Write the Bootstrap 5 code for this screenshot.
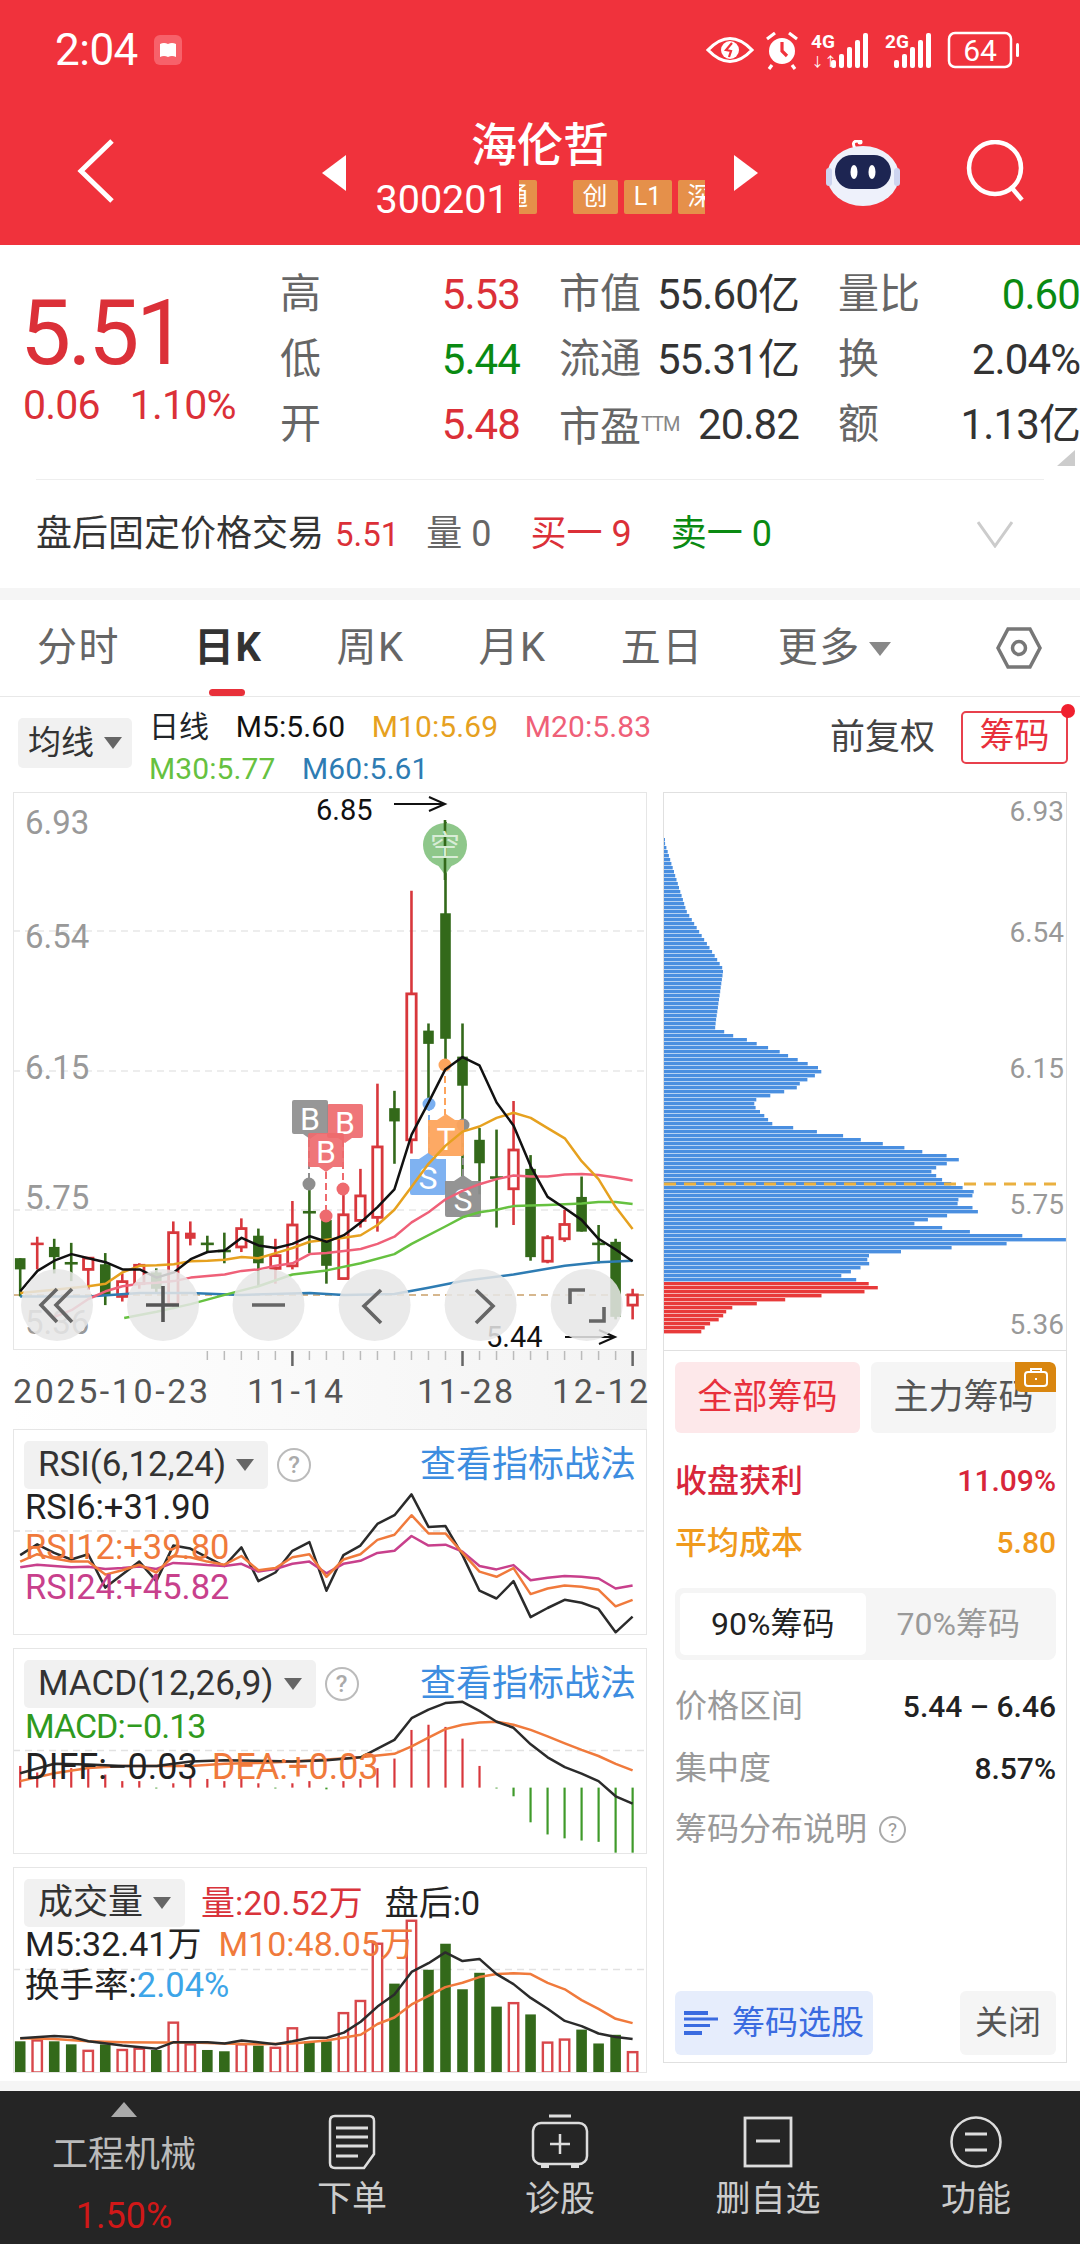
<!DOCTYPE html>
<html lang="zh-CN"><head><meta charset="utf-8"><title>海伦哲</title>
<link href="https://cdn.jsdelivr.net/npm/bootstrap@5.3.0/dist/css/bootstrap.min.css" rel="stylesheet">
<style>
html,body{margin:0;width:1080px;height:2244px;overflow:hidden;background:#fff}
body{font-family:Roboto,"Noto Sans CJK SC",sans-serif;color:#333;line-height:1.2}
svg{display:block}
.top-red{background:#f0323c;height:245px;color:#fff}
.stat-bar{height:100px;padding:0 44px 0 55px}
.clock{font-size:44px;line-height:100px;letter-spacing:-.5px}
.nav-grid{display:grid;grid-template-columns:322px 436px 322px;height:145px}
.back-cell{padding:39px 0 0 77px}
.stock-name{font-size:46px;line-height:56px;text-align:center;margin-top:17px;font-weight:500}
.code-line{width:329px;margin:0 auto;font-size:39.5px;line-height:40px;margin-top:7px}
.code-num{width:143px;flex:none}
.tag-clip{width:186px;overflow:hidden;gap:6px}
.stag{flex:none;height:34px;border-radius:2px;background:#e5904a;font-size:25px;line-height:34px;text-align:center;color:#fff;width:45px}
.stag-a{margin-left:-24px;margin-right:30px;width:42px}
.stag-b{width:48px}
.side-tri{margin-top:55px;flex:none}
.right-cell{padding:40px 52px 0 0;gap:66px}
.quote-wrap{height:343px;position:relative}
.quote-top{height:234px}
.big-price{width:281px;padding:39px 0 0 20px;color:#db3038}
.big-num{font-size:91px;line-height:98px;letter-spacing:-3.4px}
.sub-num{font-size:41px;line-height:46px;letter-spacing:-.8px;gap:30px;padding-left:3px}
.qgrid{display:grid;grid-template-columns:240px 240px 242px;column-gap:39px;grid-auto-rows:65px;padding-top:17px;font-size:42px;line-height:65px;white-space:nowrap;letter-spacing:-.9px}
.qlab{color:#666;font-size:41px;letter-spacing:0}
.qval{color:#333}
.red-t{color:#db3038}.green-t{color:#0a8a12}
.ttm{font-size:20px;color:#888;vertical-align:10px;letter-spacing:-1px}
.corner-tri{position:absolute;right:5px;top:205px;width:0;height:0;border-left:18px solid transparent;border-bottom:16px solid #ccc}
.after-row{margin:0 36px;border-top:1px solid #eee;height:109px;font-size:36px;line-height:109px;white-space:nowrap}
.after-row span{margin-right:27px}
.after-row .after-px{font-size:33px;margin-left:-16px}
.after-row .after-mt{margin-left:12px}
.after-row .after-gr{color:#666}
.after-chev{margin:40px 31px 0 auto}
.gap-band{height:12px;background:#f5f5f5}
.gap-band2{height:10px;background:#f5f5f5}
.tabs-row{height:97px;border-bottom:1px solid #e8e8e8;padding:0 38px 0 37px;gap:74px}
.tabs-row .nav-link{padding:0;color:#666;font-size:40px;line-height:96px;position:relative;letter-spacing:1.5px}
.tabs-row .nav-link.active{color:#333;font-weight:700}
.tabs-row .nav-link.active::after{content:"";position:absolute;left:15px;bottom:0;width:36px;height:7px;background:#e8303a;border-radius:4px}
.tri-d{display:inline-block;width:0;height:0;border:11px solid transparent;border-top:14px solid #888;border-bottom:0;vertical-align:5px;margin-left:8px}
.tool-row{height:95px;padding:0 12px 0 18px}
.pick-box{background:#f1f1f1;border-radius:5px;color:#333;font-size:33px;height:50px;line-height:50px;padding:0 10px;white-space:nowrap;flex:none}
.pick-box i{display:inline-block;width:0;height:0;border:9px solid transparent;border-top:12px solid #666;border-bottom:0;vertical-align:5px;margin-left:10px}
.pick-up{margin-top:-4px}
.legend-b{font-size:30px;line-height:42px;margin-left:17px;width:560px;flex:none;white-space:nowrap;padding-top:6px}
.legend-b span{margin-right:26.5px;letter-spacing:.1px}
.tool-end{margin-top:-14px}
.c-blk{color:#111}.c-org{color:#e6a11f}.c-pnk{color:#ef6078}.c-grn{color:#66c140}.c-blu{color:#2e7cb3}
.fq-t{font-size:35px;color:#444;margin-right:26px}
.chip-toggle{width:107px;height:53px;border:2px solid #e8404c;border-radius:5px;color:#e8303c;font-size:35px;line-height:48px;text-align:center;position:relative}
.chip-toggle::after{content:"";position:absolute;right:-9px;top:-9px;width:14px;height:14px;border-radius:50%;background:#f0202e}
.left-col{width:650px;margin-left:13px;flex:none}
.frame{border:1px solid #e6e6e6;width:634px;position:relative;overflow:hidden;background:#fff}
.frame>svg{position:absolute;left:-1px;top:-1px}
.kbox{height:558px}
.axis-box{height:79px}
.ibox{height:206px;margin-bottom:13px;padding:11px 10px 0 10px;font-size:35px}
.vbox{height:206px;margin:0;padding:11px 10px 0 10px;font-size:35px}
.ihead{position:relative;height:48px}
.ihead .pick-box{height:48px;line-height:48px;font-size:35px;padding:0 14px}
.help-c{width:34px;height:34px;border:2px solid #bbb;border-radius:50%;color:#aaa;font-size:24px;line-height:30px;text-align:center;margin-left:9px;font-weight:500;flex:none}
.guide-l{margin-left:auto;color:#3d8de0;font-size:36px;line-height:48px;text-decoration:none}
.itext{position:relative;top:-2px;font-size:34.5px;line-height:40px;padding-left:1px;white-space:nowrap}
.itext span{margin-right:20px}
.macd-val{letter-spacing:-1px;font-size:34px}
.diff-row{font-size:36px;top:-1px}
.diff-row .c-i-org{margin-left:-6px}
.vol-m{font-size:34px;top:-3px}
.vol-m span{margin-right:17px}
.itext .c-i-sky{margin:0}
.c-i-org{color:#f07a3c}.c-i-pnk{color:#c8408c}.c-i-grn{color:#2f9a20}.c-i-sky{color:#3da5e8}.c-i-blk{color:#222}.c-i-red{color:#d9333b}
.vtop{margin-left:16px;line-height:48px;font-size:34px}
.vtop+.vtop{margin-left:22px}
.right-col{width:404px;height:1271px;border:1px solid #e0e0e0;flex:none}
.rchart{height:558px;position:relative;border-bottom:1px solid #e0e0e0;overflow:hidden}
.rchart svg{position:absolute;left:-1px;top:-1px}
.rlow{height:712px;padding:11px 10px 8px 11px}
.chip-tab{height:71px;width:185px;padding:0;font-size:35px;border:0;border-radius:6px;position:relative;line-height:71px;overflow:hidden}
.chip-tab.on,.chip-tab.on:hover{background:#fde8ea;color:#e8303c}
.chip-tab.off,.chip-tab.off:hover{background:#f5f5f5;color:#555}
.lock-t{position:absolute;right:0;top:0;width:41px;height:30px;background:#d9860f;border-radius:0 6px 0 6px;display:flex;align-items:center;justify-content:center}
.stat-a{line-height:62px;font-size:32px;font-weight:500}
.stat-first{margin-top:17px}
.stat-a b{font-size:30px;font-weight:500}
.c-rw{color:#d8263a}.c-aw{color:#f09a1c}
.seg-box{height:72px;background:#f5f5f5;border-radius:8px;padding:5px;margin:14px 0 16px}
.seg-box>div{flex:1 1 0;text-align:center;font-size:32px;line-height:62px;color:#999;border-radius:5px}
.seg-box>div.on{background:#fff;color:#222}
.stat-b{line-height:61.5px;font-size:32px;color:#999}
.stat-b b{font-size:30px;font-weight:500;color:#222}
.help-s{width:27px;height:27px;border:2px solid #aaa;border-radius:50%;font-size:19px;line-height:23px;text-align:center;color:#999;margin-left:12px;display:inline-block;vertical-align:4px}
.pick-btn,.pick-btn:hover{height:64px;width:198px;background:#e6edfc;color:#3a6be0;font-size:33px;border:0;padding:0;border-radius:6px;display:flex;align-items:center;justify-content:center;gap:14px}
.close-btn,.close-btn:hover{height:64px;width:96px;background:#f5f5f5;color:#555;font-size:33px;border:0;padding:0;border-radius:6px}
.after-gap{height:8px}
.foot-bar{height:153px;background:#252525;color:#ccc}
.foot-first{width:248px;text-align:center;color:#bbb;font-size:36px;padding-top:11px}
.foot-up{width:0;height:0;border:13px solid transparent;border-bottom:15px solid #aaa;border-top:0;margin:0 auto 17px}
.foot-pct{color:#d01818;margin-top:17px;font-size:36px;line-height:44px}
.foot-item{width:208px;padding-top:23px;text-align:center;font-size:35px;line-height:42px}
.foot-item svg{margin:0 auto 9px}
</style></head><body>
<header class="top-red">
 <div class="stat-bar d-flex align-items-center justify-content-between">
  <div class="d-flex align-items-center gap-3">
   <span class="clock">2:04</span>
   <svg width="28" height="30" viewBox="0 0 28 30"><rect width="28" height="30" rx="6" fill="#f7616a"/><path d="M6 9q4-2 8 0q4-2 8 0v13q-4-2-8 0q-4-2-8 0z" fill="#fff"/></svg>
  </div>
  <div class="d-flex align-items-center">
   <svg width="330" height="40" viewBox="0 0 330 40" fill="none" stroke="#fff" stroke-width="3.2">
    <path d="M2 20Q24-3 46 20Q24 43 2 20z"/><circle cx="24" cy="20" r="9" fill="#fff" stroke="none"/><path d="M26 13l-6 7 5 1-2 6" stroke="#f0323c" stroke-width="2.2"/>
    <circle cx="76" cy="21" r="13" fill="#fff" stroke="none"/><path d="M76 12v9l5 5" stroke="#f0323c"/><path d="M61 9l8-6M91 9l-8-6M66 35l-3 4M86 35l3 4"/>
    <text x="105" y="18" font-size="19" font-weight="700" fill="#fff" stroke="none" font-family="Roboto">4G</text>
    <text x="105" y="36" font-size="13" fill="#fff" stroke="none">↓↑</text>
    <g stroke="none" fill="#fff"><rect x="125" y="30" width="5" height="8" rx="2"/><rect x="133" y="24" width="5" height="14" rx="2"/><rect x="141" y="17" width="5" height="21" rx="2"/><rect x="149" y="10" width="5" height="28" rx="2"/><rect x="157" y="3" width="5" height="35" rx="2"/>
    <rect x="188" y="30" width="5" height="8" rx="2"/><rect x="196" y="24" width="5" height="14" rx="2"/><rect x="204" y="17" width="5" height="21" rx="2"/><rect x="212" y="10" width="5" height="28" rx="2"/><rect x="220" y="3" width="5" height="35" rx="2"/></g>
    <text x="179" y="18" font-size="19" font-weight="700" fill="#fff" stroke="none" font-family="Roboto">2G</text>
    <rect x="243" y="3" width="62" height="34" rx="6" stroke-width="2.5"/><text x="274" y="31" font-size="30" text-anchor="middle" fill="#fff" stroke="none" font-family="Roboto">64</text>
    <rect x="310" y="13" width="3" height="14" rx="1.5" fill="#fff" stroke="none"/>
   </svg>
  </div>
 </div>
 <div class="nav-grid">
  <div class="back-cell"><svg width="38" height="64" viewBox="0 0 38 64" fill="none" stroke="#fff" stroke-width="5"><path d="M35 2L4 32l31 30"/></svg></div>
  <div class="d-flex">
   <svg class="side-tri" width="24" height="36" viewBox="0 0 24 36"><path d="M24 0v36L0 18z" fill="#fff"/></svg>
   <div class="flex-grow-1 text-center">
    <div class="stock-name">海伦哲</div>
    <div class="code-line d-flex"><div class="code-num text-start">300201</div>
     <div class="tag-clip d-flex"><span class="stag stag-a">通</span><span class="stag">创</span><span class="stag stag-b">L1</span><span class="stag">深</span></div></div>
   </div>
   <svg class="side-tri" width="24" height="36" viewBox="0 0 24 36"><path d="M0 0v36l24-18z" fill="#fff"/></svg>
  </div>
  <div class="right-cell d-flex justify-content-end align-items-start">
   <svg width="74" height="66" viewBox="0 0 74 66"><path d="M30 10q-6-9 2-9" fill="none" stroke="#fff" stroke-width="3"/><circle cx="34" cy="2" r="2.5" fill="#fff"/><ellipse cx="37" cy="36" rx="36" ry="30" fill="#eef1fb"/><rect x="0" y="28" width="6" height="18" rx="3" fill="#cdd4f0"/><rect x="68" y="28" width="6" height="18" rx="3" fill="#cdd4f0"/><rect x="9" y="15" width="56" height="34" rx="17" fill="#1d2552"/><ellipse cx="28" cy="32" rx="3.5" ry="7" fill="#fff"/><ellipse cx="46" cy="32" rx="3.5" ry="7" fill="#fff"/></svg>
   <svg width="62" height="62" viewBox="0 0 62 62" fill="none" stroke="#fff" stroke-width="4.5"><circle cx="29" cy="28" r="26"/><path d="M46 48l10 12"/></svg>
  </div>
 </div>
</header>
<section class="quote-wrap">
 <div class="quote-top d-flex">
  <div class="big-price"><div class="big-num">5.51</div><div class="sub-num d-flex"><span>0.06</span><span>1.10%</span></div></div>
  <div class="qgrid">
   <div class="d-flex justify-content-between"><span class="qlab">高</span><span class="red-t">5.53</span></div>
   <div class="d-flex justify-content-between"><span class="qlab">市值</span><span class="qval">55.60亿</span></div>
   <div class="d-flex justify-content-between"><span class="qlab">量比</span><span class="green-t">0.60</span></div>
   <div class="d-flex justify-content-between"><span class="qlab">低</span><span class="green-t">5.44</span></div>
   <div class="d-flex justify-content-between"><span class="qlab">流通</span><span class="qval">55.31亿</span></div>
   <div class="d-flex justify-content-between"><span class="qlab">换</span><span class="qval">2.04%</span></div>
   <div class="d-flex justify-content-between"><span class="qlab">开</span><span class="red-t">5.48</span></div>
   <div class="d-flex justify-content-between"><span class="qlab">市盈<span class="ttm">TTM</span></span><span class="qval">20.82</span></div>
   <div class="d-flex justify-content-between"><span class="qlab">额</span><span class="qval">1.13亿</span></div>
  </div>
 </div>
 <div class="corner-tri"></div>
 <div class="after-row d-flex position-relative"><span>盘后固定价格交易</span><span class="red-t after-px">5.51</span><span class="after-gr">量 0</span><span class="red-t after-mt">买一 9</span><span class="green-t after-mt">卖一 0</span>
  <svg class="after-chev" width="36" height="28" viewBox="0 0 36 28" fill="none" stroke="#ccc" stroke-width="3"><path d="M1 2l17 24L35 2"/></svg></div>
</section>
<div class="gap-band"></div>
<nav class="nav tabs-row align-items-center flex-nowrap">
 <a class="nav-link" href="#">分时</a><a class="nav-link active" href="#">日K</a><a class="nav-link" href="#">周K</a><a class="nav-link" href="#">月K</a><a class="nav-link" href="#">五日</a><a class="nav-link" href="#">更多<i class="tri-d"></i></a>
 <svg class="ms-auto" width="46" height="42" viewBox="0 0 46 42" fill="none" stroke="#777" stroke-width="3.5"><path d="M12 2h22l10 19-10 19H12L2 21z"/><circle cx="23" cy="21" r="6.5"/></svg>
</nav>
<div class="tool-row d-flex align-items-center">
 <div class="pick-box pick-up">均线<i></i></div>
 <div class="legend-b"><span class="text-dark">日线</span><span class="c-blk">M5:5.60</span><span class="c-org">M10:5.69</span><span class="c-pnk">M20:5.83</span><br><span class="c-grn">M30:5.77</span><span class="c-blu">M60:5.61</span></div>
 <div class="ms-auto d-flex align-items-center tool-end"><span class="fq-t">前复权</span><div class="chip-toggle">筹码</div></div>
</div>
<main class="d-flex">
 <div class="left-col">
  <div class="frame kbox"><svg id="k" width="634" height="558" viewBox="13 792 634 558"></svg></div>
  <div class="axis-box"><svg id="ax" width="650" height="79" viewBox="13 1350 650 79"></svg></div>
  <div class="frame ibox"><svg id="rsi" width="634" height="206" viewBox="13 1430 634 206"></svg>
   <div class="ihead d-flex align-items-center"><div class="pick-box">RSI(6,12,24)<i></i></div><div class="help-c">?</div><a class="guide-l" href="#">查看指标战法</a></div>
   <div class="itext c-i-blk">RSI6:+31.90</div><div class="itext c-i-org">RSI12:+39.80</div><div class="itext c-i-pnk">RSI24:+45.82</div>
  </div>
  <div class="frame ibox"><svg id="macd" width="634" height="206" viewBox="13 1648.5 634 206"></svg>
   <div class="ihead d-flex align-items-center"><div class="pick-box">MACD(12,26,9)<i></i></div><div class="help-c">?</div><a class="guide-l" href="#">查看指标战法</a></div>
   <div class="itext c-i-grn macd-val">MACD:−0.13</div><div class="itext diff-row"><span class="c-i-blk">DIFF:−0.03</span><span class="c-i-org">DEA:+0.03</span></div>
  </div>
  <div class="frame vbox"><svg id="vol" width="634" height="206" viewBox="13 1867.5 634 206"></svg>
   <div class="ihead d-flex align-items-center"><div class="pick-box">成交量<i></i></div><span class="vtop c-i-red">量:20.52万</span><span class="vtop c-i-blk">盘后:0</span></div>
   <div class="itext vol-m"><span class="c-i-blk">M5:32.41万</span><span class="c-i-org">M10:48.05万</span></div><div class="itext c-i-blk">换手率:<span class="c-i-sky">2.04%</span></div>
  </div>
 </div>
 <aside class="right-col">
  <div class="rchart"><svg id="chip" width="404" height="558" viewBox="663 792 404 558"></svg></div>
  <div class="rlow d-flex flex-column">
   <div class="d-flex justify-content-between"><button class="btn chip-tab on">全部筹码</button><button class="btn chip-tab off">主力筹码<span class="lock-t"><svg width="24" height="20" viewBox="0 0 24 20" fill="none" stroke="#fff" stroke-width="2"><rect x="1" y="5" width="22" height="14" rx="3"/><path d="M7 5V2h10v3"/><path d="M12 11v2"/></svg></span></button></div>
   <div class="stat-a stat-first c-rw d-flex justify-content-between"><span>收盘获利</span><b>11.09%</b></div>
   <div class="stat-a c-aw d-flex justify-content-between"><span>平均成本</span><b>5.80</b></div>
   <div class="seg-box d-flex"><div class="on">90%筹码</div><div>70%筹码</div></div>
   <div class="stat-b d-flex justify-content-between"><span>价格区间</span><b>5.44 – 6.46</b></div>
   <div class="stat-b d-flex justify-content-between"><span>集中度</span><b>8.57%</b></div>
   <div class="stat-b"><span>筹码分布说明</span><span class="help-s">?</span></div>
   <div class="mt-auto d-flex justify-content-between"><button class="btn pick-btn"><svg width="34" height="24" viewBox="0 0 34 24" fill="#3a6be0"><rect width="24" height="4"/><rect y="6.5" width="34" height="3"/><rect y="13" width="26" height="3"/><rect y="20" width="18" height="4"/></svg>筹码选股</button><button class="btn close-btn">关闭</button></div>
  </div>
 </aside>
</main>
<div class="after-gap"></div>
<div class="gap-band2"></div>
<footer class="foot-bar d-flex">
 <div class="foot-first"><div class="foot-up"></div><div>工程机械</div><div class="foot-pct">1.50%</div></div>
 <div class="foot-item"><svg width="48" height="56" viewBox="0 0 48 56" fill="none" stroke="#ddd" stroke-width="2.5"><path d="M7 2h34q5 0 5 5v33L36 54H7q-5 0-5-5V7q0-5 5-5z"/><path d="M8 14h32M8 23h32M8 32h32M8 42h22" stroke-width="3"/></svg>下单</div>
 <div class="foot-item"><svg width="58" height="56" viewBox="0 0 58 56" fill="none" stroke="#ddd" stroke-width="2.5"><path d="M18 2h22" stroke-width="3"/><rect x="2" y="9" width="54" height="41" rx="8"/><path d="M29 20v20M19 30h20"/><path d="M10 52h8M40 52h8" stroke-width="4"/></svg>诊股</div>
 <div class="foot-item"><svg width="50" height="56" viewBox="0 0 50 56" fill="none" stroke="#ddd" stroke-width="2.8"><rect x="2" y="4" width="46" height="48"/><path d="M13 27h24" stroke-width="3"/></svg>删自选</div>
 <div class="foot-item"><svg width="52" height="56" viewBox="0 0 52 56" fill="none" stroke="#ddd" stroke-width="2.5"><circle cx="26" cy="28" r="24.5"/><path d="M15 20h22M15 36h22" stroke-width="3"/></svg>功能</div>
</footer>
<script src="https://cdn.jsdelivr.net/npm/bootstrap@5.3.0/dist/js/bootstrap.bundle.min.js"></script>
<script>
const RX=2.376,CX=i=>(48+40.42*i)/RX;
const pl=(s,fy,col,w=2.5)=>{const p=s.trim().split(/\s+/).map(a=>{const[x,y]=a.split(',');return (x/RX).toFixed(1)+','+fy(+y).toFixed(1)}).join(' ');return `<polyline points="${p}" fill="none" stroke="${col}" stroke-width="${w}" stroke-linejoin="round"/>`};
const G='#33691a',R='#d8373c';
const KY=y=>600+y/1.96;
const kd=[[1290,1290,1312,1365,'g'],[1248,1262,1262,1312,'r'],[1252,1268,1288,1320,'g'],[1260,1300,1300,1335,'g'],[1288,1290,1312,1352,'r'],[1280,1302,1362,1382,'g'],[1320,1336,1365,1375,'r'],[1300,1304,1340,1350,'r'],[1310,1318,1350,1360,'g'],[1218,1240,1380,1390,'r'],[1218,1240,1252,1265,'rf'],[1246,1262,1262,1280,'g'],[1240,1276,1276,1300,'g'],[1212,1232,1268,1278,'r'],[1232,1246,1300,1345,'g'],[1252,1285,1310,1340,'r'],[1178,1225,1305,1312,'r'],[1145,1200,1200,1280,'g'],[1205,1215,1305,1340,'g'],[1155,1205,1330,1332,'r'],[1115,1168,1216,1230,'r'],[948,1072,1210,1238,'r'],[962,996,1022,1105,'g'],[570,772,1058,1085,'r'],[830,844,870,990,'g'],[435,614,860,915,'g'],[830,895,952,1130,'g'],[1035,1058,1104,1165,'g'],[1038,1132,1132,1230,'g'],[982,1078,1154,1225,'r'],[1088,1115,1288,1295,'g'],[1245,1250,1296,1300,'r'],[1195,1224,1252,1258,'r'],[1130,1170,1238,1238,'g'],[1225,1262,1262,1300,'g'],[1252,1258,1405,1410,'g'],[1350,1362,1382,1410,'r']];
let s='';
const lab=(t,y)=>`<text x="25" y="${y}" font-size="33" fill="#999">${t}</text>`;
s+=`<path d="M13 931H647M13 1071H647M13 1210H647" stroke="#e8e8e8" stroke-width="1.5" stroke-dasharray="7 5"/>`;
s+=lab('6.93',834)+lab('6.54',948)+lab('6.15',1079)+lab('5.75',1209)+lab('5.36',1334);
s+=`<path d="M13 1295H647" stroke="#c9a06a" stroke-width="1.5" stroke-dasharray="7 5"/>`;
kd.forEach((c,i)=>{const x=CX(i),col=c[4]=='g'?G:R,[h,t,b,l]=c.map((v,j)=>j<4?KY(v):0);
 s+=`<path d="M${x} ${h}V${l}" stroke="${col}" stroke-width="2.6"/>`;
 if(t==b)s+=`<rect x="${x-6.5}" y="${t-1.3}" width="13" height="2.6" fill="${col}"/>`;
 else if(c[4]=='r')s+=`<rect x="${x-4.7}" y="${t}" width="9.4" height="${b-t}" fill="#fff" stroke="${col}" stroke-width="2.8"/>`;
 else s+=`<rect x="${x-5.3}" y="${t}" width="10.6" height="${b-t}" fill="${col}"/>`;});
const dash=(x,a,b,c)=>`<path d="M${x} ${a}V${b}" stroke="${c}" stroke-width="2" stroke-dasharray="7 4"/>`;
const dot=(x,y,c)=>`<circle cx="${x}" cy="${y}" r="6.5" fill="${c}"/>`;
const markD=(x,y,c,t)=>`<path d="M${x-18} ${y+2}q0-2 2-2h32q2 0 2 2v30q0 2-2 2h-9l-7 5-7-5h-9q-2 0-2-2z" fill="${c}" fill-opacity=".92"/><text x="${x}" y="${y+30}" font-size="32" fill="#fff" text-anchor="middle">${t}</text>`;
const markU=(x,y,c,t)=>`<path d="M${x-18} ${y+6}h9l9-6 9 6h9v34q0 2-2 2h-32q-2 0-2-2z" fill="${c}" fill-opacity=".95"/><text x="${x}" y="${y+36}" font-size="32" fill="#fff" text-anchor="middle">${t}</text>`;
s+=dash(309,1140,1184,'#8e8e8e')+dot(309,1184,'#8e8e8e')+dash(343,1140,1189,'#ee6a6e')+dot(343,1189,'#ee6a6e')+dash(326,1172,1216,'#ee6a6e')+dot(326,1216,'#ee6a6e');
s+=dash(445,1065,1115,'#fda45c')+dot(445,1065,'#fda45c')+dash(429,1104,1154,'#78aef0')+dot(429,1104,'#78aef0')+dash(463,1125,1176,'#8e8e8e')+dot(463,1125,'#8e8e8e');
s+=markD(345,1104,'#ee6a6e','B')+markD(310,1100,'#8e8e8e','B')+markD(326,1133,'#ee6a6e','B');
s+=markU(446,1114,'#fda45c','T')+markU(428,1153,'#78aef0','S')+markU(463,1175,'#8e8e8e','S');
s+=`<circle cx="445" cy="845" r="22" fill="#8ec78a"/><path d="M437 864l8 11 8-11z" fill="#8ec78a"/><path d="M445 820V880" stroke="${G}" stroke-width="2.6"/><text x="445" y="856" font-size="30" fill="#d8ecd6" text-anchor="middle">空</text>`;
s+=pl('48,1365 210,1365 332,1358 453,1358 574,1362 736,1358 817,1362 937,1360 1018,1348 1099,1335 1220,1322 1342,1305 1422,1298 1503,1295',KY,'#2e7cb3');
s+=pl('295,1407 372,1395 453,1380 534,1362 614,1345 695,1322 776,1314 857,1300 937,1282 978,1262 1058,1228 1099,1210 1139,1200 1180,1195 1220,1188 1301,1186 1382,1183 1422,1180 1463,1180 1503,1184',KY,'#66c140');
s+=pl('130,1405 170,1392 210,1370 251,1355 291,1345 332,1340 372,1338 413,1335 453,1328 493,1325 534,1322 574,1315 614,1312 655,1305 695,1300 736,1282 776,1280 817,1276 857,1272 897,1262 937,1248 978,1220 1018,1200 1058,1175 1099,1158 1139,1145 1180,1135 1220,1128 1261,1130 1301,1130 1342,1126 1382,1125 1422,1127 1463,1132 1503,1138',KY,'#ef6078');
s+=pl('48,1358 129,1352 210,1345 251,1340 291,1318 332,1305 372,1304 413,1302 453,1296 493,1295 534,1293 574,1288 614,1290 655,1280 695,1270 736,1258 776,1254 817,1250 857,1245 897,1225 937,1195 978,1150 1018,1105 1058,1070 1099,1042 1139,1032 1180,1015 1220,1005 1261,1015 1301,1035 1342,1055 1382,1100 1422,1135 1463,1190 1503,1233',KY,'#e6a11f');
s+=pl('48,1355 89,1315 129,1295 170,1282 210,1290 251,1298 291,1312 332,1312 372,1328 413,1318 453,1292 493,1278 534,1275 574,1250 614,1265 655,1270 695,1262 736,1247 776,1258 817,1245 857,1220 897,1190 937,1155 978,1048 1018,985 1058,920 1099,896 1139,912 1180,985 1220,1030 1261,1110 1301,1170 1342,1192 1382,1215 1422,1252 1463,1273 1503,1296',KY,'#111');
const arrow=(a,b,y)=>`<path d="M${a} ${y}H${b}M${b-16} ${y-7}L${b} ${y}L${b-16} ${y+7}" fill="none" stroke="#111" stroke-width="2"/>`;
s+=`<text x="316" y="820" font-size="29" fill="#111">6.85</text>`+arrow(394,445,804);
s+=`<text x="486" y="1347" font-size="29" fill="#111">5.44</text>`+arrow(565,615,1337);
[57,163,268.5,374.6,480.6,586.7].forEach(x=>s+=`<ellipse cx="${x}" cy="1305" rx="36" ry="36" fill="#e6e6e6" fill-opacity=".86"/>`);
s+=`<g fill="none" stroke="#666" stroke-width="3.6"><path d="M57 1289L41 1305L57 1322M72 1289L56 1305L72 1322"/><path d="M163 1286V1322M146 1305H179" stroke="#555"/><path d="M252 1305H285"/><path d="M381 1290L364 1306L381 1323"/><path d="M476 1290L493 1306L476 1323"/><path d="M585 1290H570V1304M604 1307V1321H589"/></g>`;
document.getElementById('k').innerHTML=s;
let a=`<defs><linearGradient id="fd" x1="0" x2="1"><stop offset="0" stop-color="#fff"/><stop offset="1" stop-color="#f3f3f3"/></linearGradient></defs><rect x="13" y="1350" width="634" height="79" fill="url(#fd)"/>`;
for(let i=11;i<37;i++){const x=CX(i),big=i==16||i==26||i==36;a+=`<path d="M${x} 1351V${big?1366:1360}" stroke="${big?'#666':'#bbb'}" stroke-width="${big?2.5:1.5}"/>`}
[['2025-10-23',13],['11-14',247],['11-28',417],['12-12',552]].forEach(d=>a+=`<text x="${d[1]}" y="1403" font-size="34" fill="#555" letter-spacing="2.6">${d[0]}</text>`);
document.getElementById('ax').innerHTML=a;
const IY=y=>1400+y/2.306;
const seq=(ys)=>ys.map((y,i)=>(48+40.42*i)+','+y).join(' ');
let r=`<path d="M13 1532H647" stroke="#e2e2e2" stroke-dasharray="7 5" stroke-width="1.5"/>`;
r+=pl(seq([360,335,355,370,358,435,405,375,420,338,345,365,385,342,420,400,350,330,442,360,338,288,268,220,295,293,360,442,460,420,503,482,463,470,484,538,502]),IY,'#2b2b2b');
r+=pl(seq([388,382,385,388,387,392,390,386,392,378,380,383,385,380,398,392,380,375,402,380,373,355,350,316,338,336,352,385,393,383,418,412,408,410,414,437,430]),IY,'#c8408c');
r+=pl(seq([375,358,368,375,375,405,395,382,400,362,365,375,382,362,395,390,365,358,410,370,358,325,313,268,310,310,355,398,410,390,450,437,430,433,440,478,463]),IY,'#f07a3c');
document.getElementById('rsi').innerHTML=r;
const mb=[845,860,855,850,850,865,880,880,897,885,872,875,880,875,885,897,885,880,899,880,875,850,828,762,750,755,782,845,897,915,975,1003,1012,1017,1020,1045,1045];
let m=`<path d="M13 1751H647" stroke="#e2e2e2" stroke-dasharray="7 5" stroke-width="1.5"/>`;
mb.forEach((y,i)=>{const x=CX(i),neg=y>896;m+=`<path d="M${x} ${IY(895)}V${IY(y)}" stroke="${neg?'#3f9a2a':R}" stroke-width="2.2"/>`});
m+=pl('48,880 129,862 210,850 291,845 372,845 453,845 534,840 614,838 695,835 776,830 857,825 937,817 978,800 1018,780 1058,760 1099,750 1139,745 1180,743 1220,750 1261,762 1301,777 1342,793 1382,808 1422,822 1463,840 1503,855',IY,'#f07a3c');
m+=pl('48,862 129,840 210,842 291,845 372,845 453,835 534,832 614,833 695,835 776,832 857,825 897,805 937,785 978,735 1018,715 1058,700 1099,697 1139,718 1180,743 1220,757 1261,795 1301,825 1342,848 1382,863 1422,880 1463,915 1503,932',IY,'#2b2b2b');
document.getElementById('macd').innerHTML=m;
const vd='g1480 r1478 g1480 g1487 r1502 g1487 r1500 r1497 g1500 r1437 r1487 g1500 g1503 r1487 g1490 r1495 r1450 g1480 g1480 r1415 r1387 r1255 g1347 r1202 g1315 g1255 g1360 g1322 g1400 r1392 g1418 r1483 r1476 g1453 g1485 g1465 r1505'.split(' ');
let v=`<path d="M13 1970H647" stroke="#e2e2e2" stroke-dasharray="7 5" stroke-width="1.5"/>`;
const vb=2074;
vd.forEach((d,i)=>{const x=CX(i),y=IY(+d.slice(1));v+=d[0]=='g'?`<rect x="${x-5.3}" y="${y}" width="10.6" height="${vb-y}" fill="${G}"/>`:`<rect x="${x-4.7}" y="${y}" width="9.4" height="${vb-y-1}" fill="#fff" stroke="#d8474b" stroke-width="2.4"/>`});
v+=pl('48,1473 129,1475 210,1480 291,1482 372,1483 453,1483 534,1485 614,1487 695,1485 776,1478 857,1465 897,1440 937,1425 978,1395 1018,1375 1058,1355 1099,1345 1139,1332 1180,1325 1220,1323 1261,1325 1301,1345 1342,1360 1382,1385 1422,1405 1463,1428 1503,1438',IY,'#f07a3c');
v+=pl('48,1473 129,1468 170,1470 210,1480 291,1490 372,1497 413,1482 493,1482 534,1485 574,1478 655,1487 695,1480 736,1472 776,1472 817,1460 857,1435 897,1400 937,1372 978,1320 1018,1300 1058,1275 1099,1295 1139,1290 1180,1325 1220,1348 1261,1380 1301,1405 1342,1433 1382,1445 1422,1462 1463,1470 1503,1475',IY,'#2b2b2b');
document.getElementById('vol').innerHTML=v;
const prof=[[310,42],[400,80],[470,110],[530,160],[570,195],[600,220],[730,195],[740,225],[750,255],[760,305],[770,330],[780,378],[795,420],[810,470],[825,522],[840,490],[855,450],[865,440],[880,375],[890,320],[905,310],[925,340],[945,365],[955,435],[965,515],[975,605],[985,650],[995,745],[1005,790],[1015,880],[1025,930],[1040,870],[1050,840],[1060,855],[1075,885],[1085,925],[1095,960],[1102,990],[1110,950],[1120,905],[1130,945],[1140,1010],[1150,900],[1160,835],[1170,790],[1180,895],[1190,985],[1197,1135],[1205,1250],[1213,1090],[1220,960],[1228,815],[1238,660],[1248,650],[1258,660],[1265,640],[1275,610],[1285,570],[1295,620],[1300,645],[1310,675],[1318,700],[1325,590],[1332,495],[1340,400],[1348,325],[1356,250],[1365,230],[1375,220],[1385,205],[1395,175],[1405,160],[1415,150]];
const at=z=>{for(let i=1;i<prof.length;i++)if(z<=prof[i][0]){const[p,q]=[prof[i-1],prof[i]];return p[1]+(q[1]-p[1])*(z-p[0])/(q[0]-p[0])}return 150};
let c='';
for(let y=838;y<1332;y+=4){const z=(y-700)*2.24,w=(at(z)-42)/3;c+=`<rect x="664" y="${y}" width="${Math.max(w,1).toFixed(1)}" height="3.4" fill="${y>=1280?'#e83a3a':'#4a8fe0'}"/>`}
c+=`<path d="M664 1184H1063" stroke="#eab040" stroke-width="3" stroke-dasharray="12 8"/>`;
[['6.93',821],['6.54',942],['6.15',1078],['5.75',1214],['5.36',1334]].forEach(l=>c+=`<text x="1064" y="${l[1]}" font-size="28" fill="#999" text-anchor="end">${l[0]}</text>`);
document.getElementById('chip').innerHTML=c;
</script>
</body></html>
